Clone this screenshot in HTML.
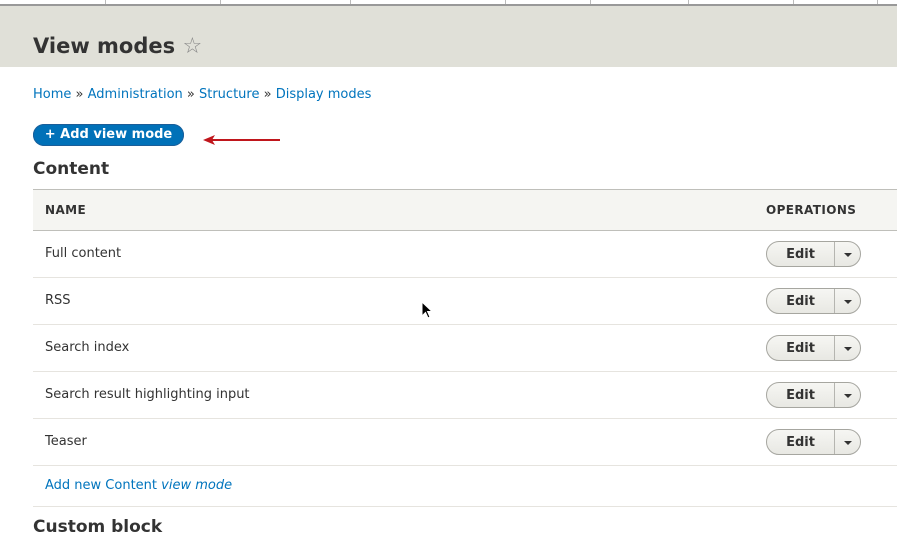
<!DOCTYPE html>
<html><head><style>
body{margin:0;width:897px;height:545px;overflow:hidden;background:#fff;font-family:"DejaVu Sans","Liberation Sans",sans-serif;color:#222;position:relative}
.a{position:absolute}
.hdr{left:0;top:0;width:897px;height:67px;background:#e0e0d8}
.topbar{left:0;top:0;width:897px;height:4px;background:#fff;border-bottom:2px solid #999}
.sep{top:0;width:1px;height:4px;background:#bbb}
h1{position:absolute;left:33px;top:34px;margin:0;font-size:21px;font-weight:bold;color:#333}
.bc{left:33px;top:87px;font-size:13px;color:#0074bd}
.bc span{color:#333}
.btn{left:33px;top:124px;width:151px;height:22px;border-radius:11px;background:#0071b8;color:#fff;font-size:13px;font-weight:bold;line-height:22px;text-align:center;box-shadow:inset 0 0 0 1px #1b5e99}
h2{position:absolute;margin:0;font-size:17px;font-weight:bold;color:#333;left:33px}
.th{left:33px;top:189px;width:864px;height:40px;background:#f5f5f2;border-top:1px solid #bfbfba;border-bottom:1px solid #bfbfba}
.th b{position:absolute;top:13px;font-size:12px;color:#333;letter-spacing:.4px}
.row{left:33px;width:864px;height:46px;border-bottom:1px solid #e6e4df}
.row .t{position:absolute;left:12px;top:15px;font-size:13px;color:#333}
.ed{position:absolute;left:733px;top:10px;width:95px;height:26px;border:1px solid #a6a6a0;border-radius:13px;background:linear-gradient(#f6f6f3,#e8e8e3);box-sizing:border-box}
.ed b{position:absolute;left:0;width:67px;top:5px;text-align:center;font-size:13px;color:#333}
.ed i{position:absolute;left:67px;top:0;width:1px;height:24px;background:#b5b5b0}
.ed s{position:absolute;left:77px;top:11px;border-left:4px solid transparent;border-right:4px solid transparent;border-top:4px solid #333}
</style></head><body>
<div class="a hdr"></div>
<div class="a topbar"></div>
<div class="a sep" style="left:105px"></div><div class="a sep" style="left:220px"></div><div class="a sep" style="left:350px"></div><div class="a sep" style="left:505px"></div><div class="a sep" style="left:590px"></div><div class="a sep" style="left:688px"></div><div class="a sep" style="left:793px"></div><div class="a sep" style="left:877px"></div>
<h1>View modes <span style="font-weight:normal;color:#888;font-size:22px">☆</span></h1>
<div class="a bc">Home <span>»</span> Administration <span>»</span> Structure <span>»</span> Display modes</div>
<div class="a btn">+ Add view mode</div>
<svg class="a" style="left:200px;top:133px" width="82" height="14"><path d="M80 7H10" stroke="#c0161c" stroke-width="2"/><path d="M3 7L15 2L12 7L15 12Z" fill="#c0161c"/></svg>
<h2 style="top:159px">Content</h2>
<div class="a th"><b style="left:12px">NAME</b><b style="left:733px">OPERATIONS</b></div>
<div class="a row" style="top:231px"><span class="t">Full content</span><div class="ed"><b>Edit</b><i></i><s></s></div></div>
<div class="a row" style="top:278px"><span class="t">RSS</span><div class="ed"><b>Edit</b><i></i><s></s></div></div>
<div class="a row" style="top:325px"><span class="t">Search index</span><div class="ed"><b>Edit</b><i></i><s></s></div></div>
<div class="a row" style="top:372px"><span class="t">Search result highlighting input</span><div class="ed"><b>Edit</b><i></i><s></s></div></div>
<div class="a row" style="top:419px"><span class="t">Teaser</span><div class="ed"><b>Edit</b><i></i><s></s></div></div>
<div class="a row" style="top:466px;height:40px"><span class="t" style="top:12px;color:#0074bd">Add new Content <i>view mode</i></span></div>
<h2 style="top:517px">Custom block</h2>
<svg class="a" style="left:421px;top:301px" width="12" height="18"><path d="M1 1V15L4.5 11.5L7 17L9 16L6.5 10.5H11Z" fill="#000" stroke="#fff" stroke-width="1"/></svg>
</body></html>
